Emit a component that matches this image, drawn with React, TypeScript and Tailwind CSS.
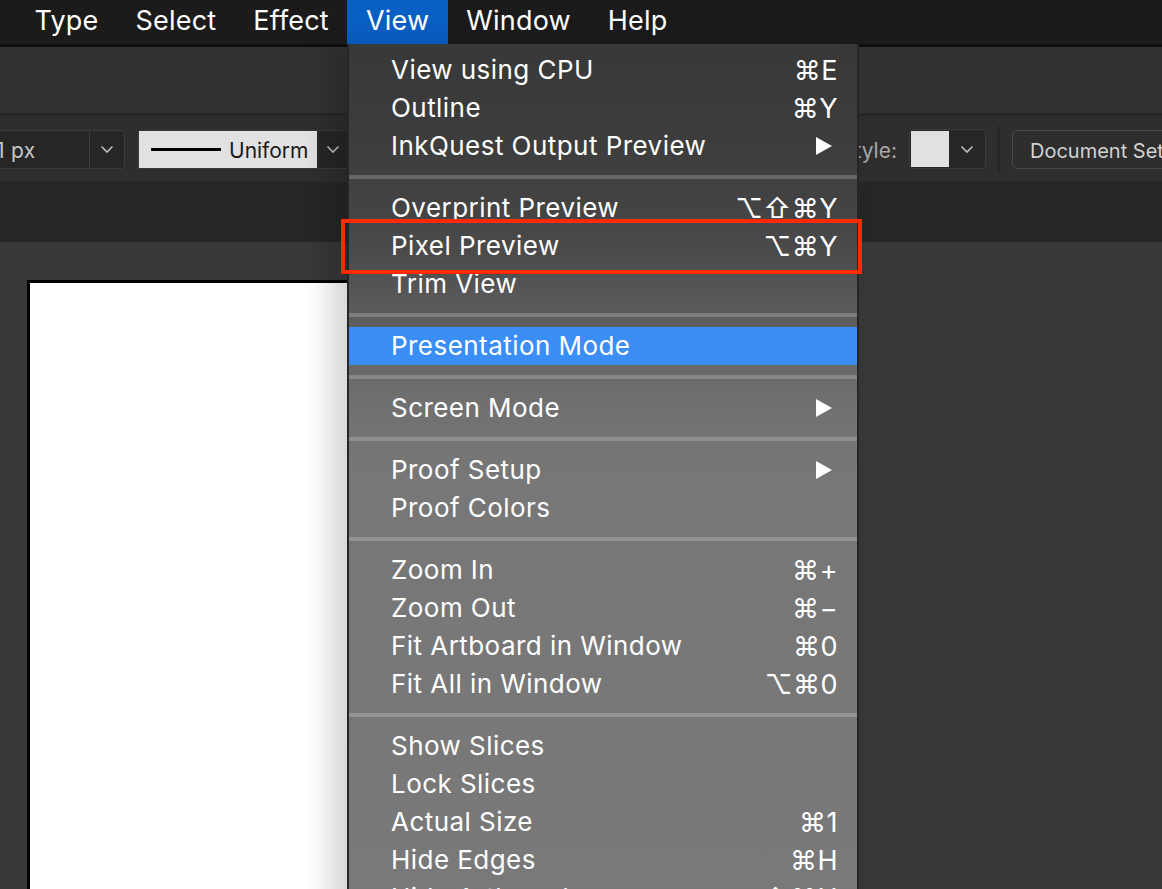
import React from "react";

type Item = { label: string; sc?: string; arrow?: boolean; hl?: boolean };

const groups: Item[][] = [
  [
    { label: "View using CPU", sc: "⌘E" },
    { label: "Outline", sc: "⌘Y" },
    { label: "InkQuest Output Preview", arrow: true },
  ],
  [
    { label: "Overprint Preview", sc: "⌥⇧⌘Y" },
    { label: "Pixel Preview", sc: "⌥⌘Y" },
    { label: "Trim View" },
  ],
  [{ label: "Presentation Mode", hl: true }],
  [{ label: "Screen Mode", arrow: true }],
  [
    { label: "Proof Setup", arrow: true },
    { label: "Proof Colors" },
  ],
  [
    { label: "Zoom In", sc: "⌘+" },
    { label: "Zoom Out", sc: "⌘−" },
    { label: "Fit Artboard in Window", sc: "⌘0" },
    { label: "Fit All in Window", sc: "⌥⌘0" },
  ],
  [
    { label: "Show Slices" },
    { label: "Lock Slices" },
    { label: "Actual Size", sc: "⌘1" },
    { label: "Hide Edges", sc: "⌘H" },
    { label: "Hide Artboards", sc: "⇧⌘H" },
  ],
];

const Chevron = () => (
  <svg width="14" height="9" viewBox="0 0 14 9" fill="none">
    <path d="M1.5 1.5 L7 7 L12.5 1.5" stroke="#bdbdbd" strokeWidth="1.6" />
  </svg>
);

const Arrow = () => (
  <svg width="18" height="20" viewBox="0 0 18 20">
    <path d="M1 1 L17 10 L1 19 Z" fill="#ffffff" />
  </svg>
);

function MenuRow({ it }: { it: Item }) {
  return (
    <div
      className={
        "flex h-[38px] items-center justify-between pl-[42px] pr-[19px] " +
        (it.hl ? "bg-[#3a8ef6]" : "")
      }
    >
      <span className="whitespace-nowrap text-[26px] leading-none tracking-[0.45px] text-white">{it.label}</span>
      {it.sc && (
        <span className="whitespace-nowrap text-[27px] leading-none tracking-[0.5px] text-white">{it.sc}</span>
      )}
      {it.arrow && (
        <span className="mr-[5px] flex items-center">
          <Arrow />
        </span>
      )}
    </div>
  );
}

export default function App() {
  const menuTop = ["Type", "Select", "Effect", "View", "Window", "Help"];
  return (
    <div className="relative h-[889px] w-[1162px] overflow-hidden bg-[#383838] font-['Inter','DejaVu_Sans',sans-serif]">
      {/* Menu bar */}
      <div className="flex h-[44px] items-stretch bg-[#1b1b1b] pl-[16px]">
        {menuTop.map((m) => (
          <div
            key={m}
            className={
              "flex items-center px-[18.5px] pb-[1px] text-[27px] tracking-[0.2px] text-white " +
              (m === "View" ? "bg-[#0a5fc5]" : "")
            }
          >
            {m}
          </div>
        ))}
      </div>
      <div className="h-[3px] bg-[#0e0e0e]" />
      {/* Row 1 */}
      <div className="h-[66px] bg-[#323232]" />
      <div className="h-[3px] bg-[#272727]" />
      {/* Row 2 */}
      <div className="flex h-[66px] items-center bg-[#2e2e2e]">
        <div className="ml-[-10px] flex h-[39px] items-stretch rounded-[4px] border border-[#3c3c3c] bg-[#262626]">
          <div className="flex w-[98px] items-center whitespace-nowrap pl-[5px] pt-[3px] text-[21px] tracking-[0.3px] text-[#c6c6c6]">1 px</div>
          <div className="w-[1px] bg-[#3c3c3c]" />
          <div className="flex w-[34px] items-center justify-center">
            <Chevron />
          </div>
        </div>
        <div className="ml-[13px] flex h-[39px] items-stretch border border-[#3a3a3a] bg-[#262626]">
          <div className="flex w-[178px] items-center bg-[#e1e1e1] pl-[12px]">
            <div className="h-[3px] w-[70px] bg-black" />
            <span className="ml-[8px] pt-[3px] text-[21px] text-[#1a1a1a]">Uniform</span>
          </div>
          <div className="flex w-[32px] items-center justify-center">
            <Chevron />
          </div>
        </div>
        <div className="flex-1" />
        <span className="mr-[12px] pt-[3px] text-[21px] text-[#a8a8a8]">Style:</span>
        <div className="flex h-[40px] items-stretch rounded-[4px] border border-[#3c3c3c] bg-[#262626]">
          <div className="my-[1px] ml-[1px] w-[38px] bg-[#e1e1e1]" />
          <div className="flex w-[36px] items-center justify-center">
            <Chevron />
          </div>
        </div>
        <div className="ml-[12px] h-[46px] w-[2px] bg-[#262626]" />
        <div className="ml-[12px] mr-[-70px] flex h-[39px] w-[220px] items-center whitespace-nowrap rounded-[5px] border border-[#4a4a4a] pl-[17px] pt-[3px] text-[20px] text-[#d2d2d2]">
          Document Setup
        </div>
      </div>
      {/* Row 3 */}
      <div className="h-[60px] bg-[#262626]" />
      {/* Canvas */}
      <div className="pl-[27px] pt-[38px]">
        <div className="h-[700px] w-[340px] border-l-[3px] border-t-[3px] border-black bg-white" />
      </div>

      {/* Dropdown menu */}
      <div className="absolute left-[347px] top-[44px] w-[512px] border-x-2 border-[#262626] bg-[linear-gradient(to_bottom,#383838_0px,#3d3d3d_100px,#434343_160px,#4b4b4b_210px,#575757_250px,#646464_300px,#707070_360px,#777777_430px,#797979_100%)] pb-[40px] pt-[7px] shadow-[-18px_0_26px_rgba(0,0,0,0.16)]">
        {groups.map((g, gi) => (
          <div key={gi}>
            {gi > 0 && (
              <div className="py-[10px]">
                <div className="h-[4px] bg-white/20" />
              </div>
            )}
            {g.map((it) => (
              <MenuRow key={it.label} it={it} />
            ))}
          </div>
        ))}
      </div>

      {/* Red highlight box */}
      <div className="absolute left-[341px] top-[219px] h-[55px] w-[521px] border-[4px] border-[#ff2a00]" />
    </div>
  );
}
